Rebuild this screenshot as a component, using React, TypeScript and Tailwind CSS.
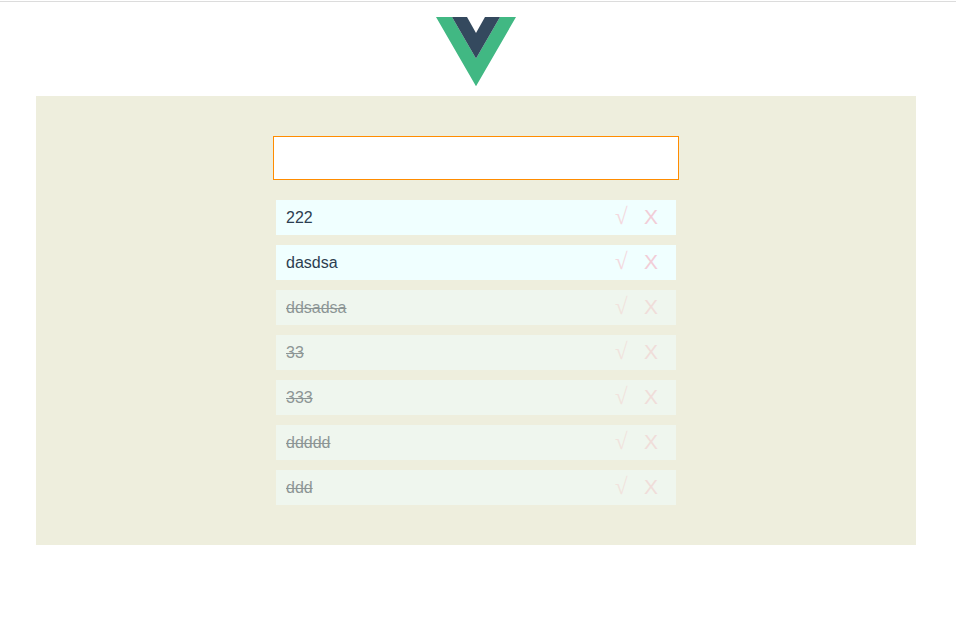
const items = [
  { text: "222", done: false },
  { text: "dasdsa", done: false },
  { text: "ddsadsa", done: true },
  { text: "33", done: true },
  { text: "333", done: true },
  { text: "ddddd", done: true },
  { text: "ddd", done: true },
];

export default function App() {
  return (
    <div className="h-[620px] w-[956px] overflow-hidden bg-white font-['Liberation_Sans',Arial,sans-serif] text-[#2c3e50]">
      <div className="mt-px h-px bg-[#dcdcdc]" />
      <svg className="mt-[15px] ml-[436px] h-[70px] w-20" viewBox="0 0 80 70">
        <path d="M0 0H16L40 41.5 64 0H80L40 69.3Z" fill="#41b883" />
        <path d="M16 0H31L40 16 49 0H64L40 41.5Z" fill="#34495e" />
      </svg>
      <main className="mt-[9px] ml-9 flex h-[449px] w-[880px] flex-col items-center bg-[#eeeedd] pt-10">
        <input className="h-11 w-[406px] border border-[#ff8c00] bg-white px-2 outline-none" />
        <ul className="mt-5 flex w-[400px] flex-col gap-[10px]">
          {items.map((item) => (
            <li
              key={item.text}
              className={`flex h-[35px] items-center bg-[#f0ffff] px-[10px] ${item.done ? "opacity-50" : ""}`}
            >
              <span className={`flex-1 text-base ${item.done ? "line-through" : ""}`}>{item.text}</span>
              <span className="mr-[17px] w-3 pb-px font-['Liberation_Serif',serif] text-[23px] leading-6 text-[#f4d8de]">√</span>
              <span className="mr-[7px] w-[15px] pb-0.5 text-[21px] leading-6 text-[#f2cdd7]">X</span>
            </li>
          ))}
        </ul>
      </main>
    </div>
  );
}
